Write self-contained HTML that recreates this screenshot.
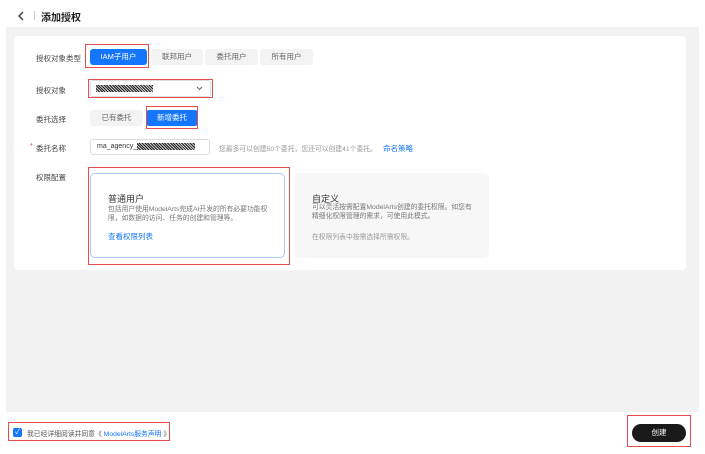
<!DOCTYPE html>
<html><head><meta charset="utf-8"><style>
*{margin:0;padding:0;box-sizing:border-box}
body{width:705px;height:454px;background:#fff;font-family:"Liberation Sans","Noto Sans CJK SC",sans-serif;position:relative;overflow:hidden;color:#333}
.a{position:absolute}
.lbl{font-size:7.5px;color:#444}
.btn{position:absolute;height:16px;border-radius:3px;font-size:7.5px;text-align:center;line-height:16px;background:#f3f3f3;color:#666}
.blue{background:#1476ff;color:#fff}
.red{position:absolute;border:1.5px solid #e74c4c}
.hatch{display:inline-block;background:repeating-linear-gradient(45deg,#222 0 1px,#ccc 1px 2px);height:7px;vertical-align:middle}
</style></head><body>
<svg class="a" style="left:17px;top:11px" width="8" height="10"><path d="M6 1L2 5L6 9" stroke="#333" stroke-width="1.3" fill="none"/></svg>
<div class="a" style="left:34px;top:11px;width:1px;height:9px;background:#ccc"></div>
<div class="a" style="left:41px;top:9px;font-size:10px;font-weight:bold;color:#222">添加授权</div>
<div class="a" style="left:6px;top:27px;width:693px;height:385px;background:#f2f2f2"></div>
<div class="a" style="left:14px;top:36px;width:672px;height:234px;background:#fff;border-radius:4px"></div>

<div class="a lbl" style="left:36px;top:53px">授权对象类型</div>
<div class="btn blue" style="left:90px;top:49px;width:57px">IAM子用户</div>
<div class="btn" style="left:151px;top:49px;width:52px">联邦用户</div>
<div class="btn" style="left:205px;top:49px;width:53px">委托用户</div>
<div class="btn" style="left:260px;top:49px;width:53px">所有用户</div>
<div class="red" style="left:85px;top:44px;width:64px;height:24px"></div>

<div class="a lbl" style="left:36px;top:85px">授权对象</div>
<div class="a" style="left:90px;top:80px;width:121px;height:17px;border:1px solid #ddd;border-radius:3px"><span class="hatch a" style="left:5px;top:4px;width:57px"></span><svg class="a" style="right:7px;top:5px" width="7" height="5"><path d="M1 1L3.5 3.5L6 1" stroke="#666" stroke-width="1" fill="none"/></svg></div>
<div class="red" style="left:88px;top:79px;width:125px;height:19px"></div>

<div class="a lbl" style="left:36px;top:114px">委托选择</div>
<div class="btn" style="left:90px;top:110px;width:53px">已有委托</div>
<div class="btn blue" style="left:146px;top:110px;width:52px">新增委托</div>
<div class="red" style="left:146px;top:106px;width:52px;height:23px"></div>

<div class="a" style="left:30px;top:143px;font-size:7px;color:#e33">*</div>
<div class="a lbl" style="left:36px;top:143px">委托名称</div>
<div class="a" style="left:90px;top:139px;width:120px;height:16px;border:1px solid #ddd;border-radius:3px;font-size:7px;line-height:14px;padding-left:6px;color:#333">ma_agency_<span class="hatch" style="width:58px"></span></div>
<div class="a" style="left:219px;top:143px;font-size:6.8px;color:#999">您最多可以创建50个委托，您还可以创建41个委托。</div>
<div class="a" style="left:383px;top:143px;font-size:7.5px;color:#1476ff">命名策略</div>

<div class="a lbl" style="left:36px;top:172px">权限配置</div>
<div class="a" style="left:90px;top:173px;width:195px;height:85px;border:1px solid #a9c8ff;border-radius:5px"></div>
<div class="a" style="left:108px;top:192px;font-size:9px;color:#333">普通用户</div>
<div class="a" style="left:108px;top:205px;width:162px;font-size:6.8px;line-height:9px;color:#777">包括用户使用ModelArts完成AI开发的所有必要功能权限，如数据的访问、任务的创建和管理等。</div>
<div class="a" style="left:108px;top:231px;font-size:7.5px;color:#1476ff">查看权限列表</div>
<div class="red" style="left:88px;top:167px;width:202px;height:98px"></div>

<div class="a" style="left:294px;top:173px;width:195px;height:85px;background:#f7f7f7;border-radius:5px"></div>
<div class="a" style="left:312px;top:192px;font-size:9px;color:#333">自定义</div>
<div class="a" style="left:312px;top:203px;width:162px;font-size:6.8px;line-height:9px;color:#777">可以灵活按需配置ModelArts创建的委托权限。如您有精细化权限管理的需求，可使用此模式。</div>
<div class="a" style="left:312px;top:231px;font-size:6.8px;color:#999">在权限列表中按需选择所需权限。</div>

<div class="a" style="left:13px;top:428px;width:9px;height:9px;background:#1476ff;border-radius:2px;color:#fff;font-size:7px;line-height:9px;text-align:center">✓</div>
<div class="a" style="left:27px;top:428px;font-size:6.8px;color:#555">我已经详细阅读并同意《 <span style="color:#1476ff">ModelArts服务声明</span> 》</div>
<div class="red" style="left:8px;top:422px;width:162px;height:19px"></div>
<div class="a" style="left:632px;top:424px;width:54px;height:18px;background:#1a1a1a;border-radius:9px;color:#fff;font-size:7.5px;line-height:18px;text-align:center">创建</div>
<div class="red" style="left:627px;top:415px;width:64px;height:32px"></div>
</body></html>
